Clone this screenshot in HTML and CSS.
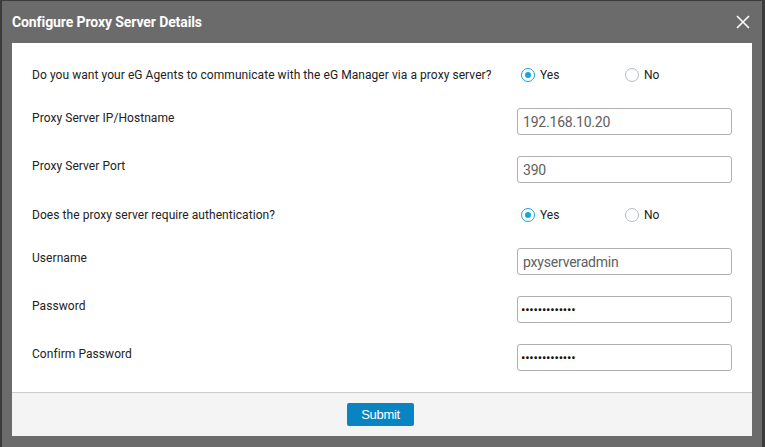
FILE: index.html
```html
<!DOCTYPE html>
<html>
<head>
<meta charset="utf-8">
<link rel="stylesheet" href="styles.css">
</head>
<body>
<div class="modal">
  <div class="header">
    <span class="title">Configure Proxy Server Details</span>
    <svg class="close" width="14" height="14" viewBox="0 0 14 14"><path d="M1 1 L13 13 M13 1 L1 13" stroke="#fff" stroke-width="1.6" fill="none"/></svg>
  </div>
  <div class="body">
    <div class="row radio-row r1">
      <div class="label">Do you want your eG Agents to communicate with the eG Manager via a proxy server?</div>
      <div class="field radios">
        <label class="opt"><span class="radio checked"></span>Yes</label>
        <label class="opt"><span class="radio"></span>No</label>
      </div>
    </div>
    <div class="row input-row r2">
      <div class="label">Proxy Server IP/Hostname</div>
      <div class="field"><input class="text" type="text" value="192.168.10.20"></div>
    </div>
    <div class="row input-row r3">
      <div class="label">Proxy Server Port</div>
      <div class="field"><input class="text" type="text" value="390"></div>
    </div>
    <div class="row radio-row r4">
      <div class="label">Does the proxy server require authentication?</div>
      <div class="field radios">
        <label class="opt"><span class="radio checked"></span>Yes</label>
        <label class="opt"><span class="radio"></span>No</label>
      </div>
    </div>
    <div class="row input-row r5">
      <div class="label">Username</div>
      <div class="field"><input class="text" type="text" value="pxyserveradmin"></div>
    </div>
    <div class="row input-row r6">
      <div class="label">Password</div>
      <div class="field"><input class="text pw" type="password" value="abcdefghijklm"></div>
    </div>
    <div class="row input-row r7">
      <div class="label">Confirm Password</div>
      <div class="field"><input class="text pw" type="password" value="abcdefghijklm"></div>
    </div>
  </div>
  <div class="footer">
    <button class="submit">Submit</button>
  </div>
</div>
</body>
</html>
```
FILE: styles.css
```css
html, body {
  margin: 0;
  padding: 0;
  background: #3b3b3b;
  height: 447px;
  overflow: hidden;
}
.modal {
  margin: 1px 3px 0 2px;
  height: 446px;
  background: #6b6b6b;
  padding: 0 10px 11px 10px;
  box-sizing: border-box;
  display: flex;
  flex-direction: column;
  font-family: Roboto, "Liberation Sans", sans-serif;
}
.header {
  height: 42px;
  display: flex;
  align-items: center;
  justify-content: space-between;
  padding-bottom: 1px;
  box-sizing: border-box;
}
.title {
  color: #fff;
  font-weight: bold;
  font-size: 14px;
  letter-spacing: -0.1px;
}
.close {
  margin-right: 2px;
  margin-top: 1px;
}
.body {
  background: #fff;
  padding: 18px 0 21px 20px;
  display: flex;
  flex-direction: column;
}
.row {
  display: flex;
  height: 27px;
}
.r2, .r3, .r6, .r7 { margin-top: 21px; }
.r2 { margin-top: 20px; }
.r4 { margin-top: 18px; }
.r5 { margin-top: 20px; }
.label {
  width: 485px;
  font-size: 12px;
  color: #222;
  line-height: 14px;
  letter-spacing: 0.06px;
}
.radio-row .label {
  align-self: center;
}
.input-row .label {
  padding-top: 3px;
}
.field {
  width: 215px;
}
.radios {
  display: flex;
  align-items: center;
  padding-left: 4px;
}
.opt {
  display: flex;
  align-items: center;
  width: 104px;
  font-size: 12px;
  color: #222;
}
.radio {
  width: 12px;
  height: 12px;
  border: 1px solid #b3bcc5;
  border-radius: 50%;
  margin-right: 5px;
  box-sizing: content-box;
  position: relative;
}
.radio.checked {
  border-color: #1aa3dc;
}
.radio.checked::after {
  content: "";
  position: absolute;
  left: 3px;
  top: 3px;
  width: 6px;
  height: 6px;
  border-radius: 50%;
  background: #1aa3dc;
}
.text {
  width: 215px;
  height: 27px;
  box-sizing: border-box;
  border: 1px solid #b0b0b0;
  border-radius: 3px;
  padding: 0 5px;
  font-family: Roboto, "Liberation Sans", sans-serif;
  font-size: 14px;
  letter-spacing: -0.2px;
  color: #606060;
  outline: none;
  margin: 0;
}
.text.pw {
  color: #111;
  font-size: 13px;
  letter-spacing: -0.2px;
  padding-left: 3px;
}
.footer {
  border-top: 1px solid #cccccc;
  background: #f4f4f4;
  height: 44px;
  display: flex;
  justify-content: center;
  align-items: center;
  box-sizing: border-box;
  padding-right: 3px;
}
.submit {
  background: #0984c2;
  color: #fff;
  border: none;
  border-radius: 2px;
  width: 67px;
  height: 23px;
  font-family: "Liberation Sans", Arial, sans-serif;
  font-size: 13px;
  padding: 0;
  letter-spacing: -0.3px;
}
```
